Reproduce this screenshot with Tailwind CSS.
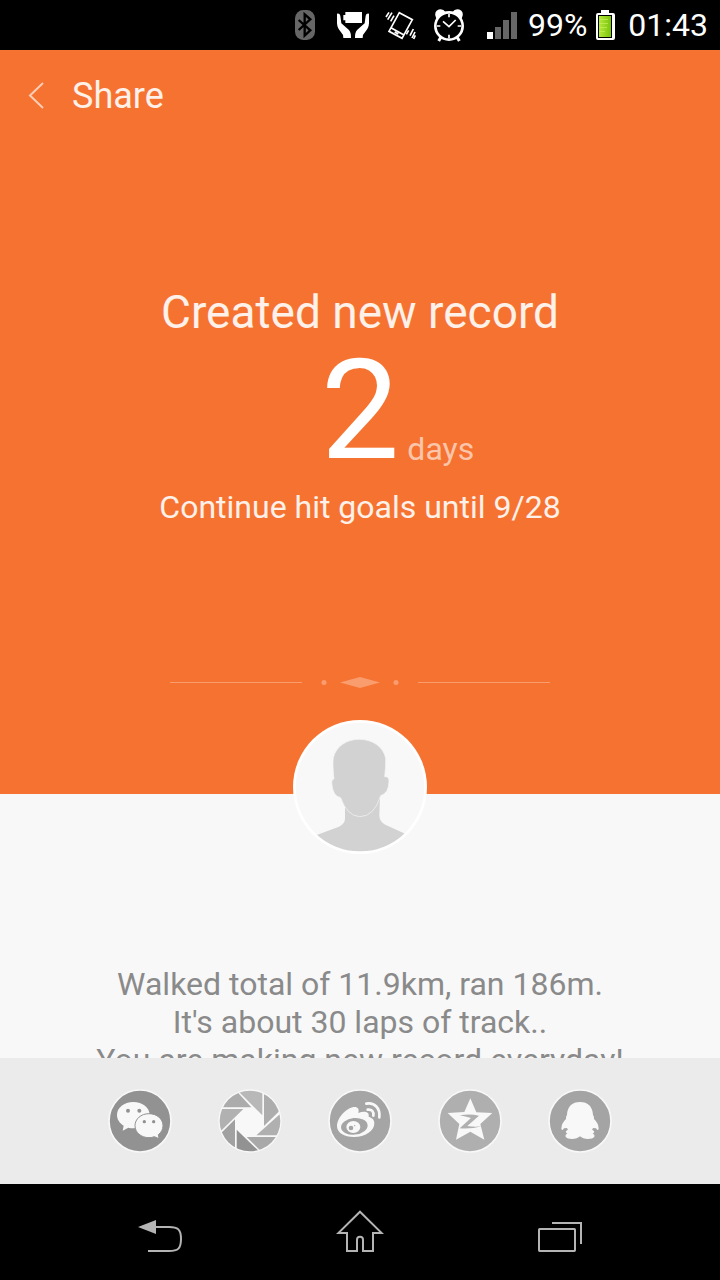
<!DOCTYPE html>
<html lang="en">
<head>
<meta charset="utf-8">
<meta name="viewport" content="width=device-width, initial-scale=1">
<title>Share</title>
<script src="https://cdn.jsdelivr.net/npm/@tailwindcss/browser@4"></script>
</head>
<body class="flex h-screen flex-col overflow-hidden bg-[#f8f8f8] font-[Roboto,sans-serif]">

<!-- Status bar -->
<div class="flex h-[50px] shrink-0 items-center justify-end bg-black pr-3 text-[32px] leading-[50px] text-white">
  <svg class="h-[50px] w-12" viewBox="3 0 144 150" role="img" aria-label="Bluetooth"><rect x="45" y="30" width="60" height="90" rx="25" fill="#666"/><path d="M56 60l35 31-17 16V43l17 15-35 32" fill="none" stroke="#000" stroke-width="7"/></svg>
  <svg class="h-[50px] w-12" viewBox="147 0 144 150" fill="#fff" role="img" aria-label="Battery saver"><path d="M196 36h50v33h-50v-8h-6V45h6z"/><path d="M171 41q8-2 10 6l3 23 22 19q8 8 7 25h-23q0-12-8-19-10-10-11-25zM267 41q-8-2-10 6l-3 23-22 19q-8 8-7 25h23q0-12 8-19 10-10 11-25z"/></svg>
  <svg class="h-[50px] w-12" viewBox="291 0 144 150" fill="none" stroke="#fff" stroke-width="5" role="img" aria-label="Vibrate"><path d="M358 38l39 21-31 56-39-21zM334 84l38 21M344 96l11 6"/><path d="M318 51l9-14M323 59l13-21M332 64l10-17M400 87l-10 20M405 96l-9 18M406 106l-5 11M386 91l-7 12"/></svg>
  <svg class="h-[50px] w-12" viewBox="435 0 144 150" fill="none" stroke="#fff" role="img" aria-label="Alarm"><circle cx="507" cy="78" r="41" stroke-width="8"/><path d="M470 51q-6-15 7-20 11-3 18 7zM544 51q6-15-7-20-11-3-18 7z" fill="#fff" stroke-width="5"/><path d="M483 111l-7 12M531 111l7 12" stroke-width="9"/><path d="M489 64l18 16 20-20" stroke-width="5"/><path d="M507 42v10M507 104v10M471 78h10M533 78h10" stroke-width="5"/></svg>
  <svg class="ml-[14px] h-[50px] w-[30px]" viewBox="0 0 30 50" fill="#666" role="img" aria-label="Signal"><path d="M0 32h6v7H0z" fill="#fff"/><path d="M8 27h6v12H8zM16 20h6v19h-6zM24 12h6v27h-6z"/></svg>
  <span class="ml-[11px]">99%</span>
  <svg class="ml-2 h-[50px] w-[20px]" viewBox="0 0 20 50" role="img" aria-label="Battery">
    <defs><linearGradient id="charge"><stop stop-color="#b5e83a"/><stop offset="1" stop-color="#79c40c"/></linearGradient></defs>
    <path d="M6 10h8v3h4q2 0 2 2v23q0 2-2 2H3q-2 0-2-2V15q0-2 2-2h3z" fill="#fff"/><path d="M3 15h14v23H3z"/><path d="M4 16h12v21H4z" fill="url(#charge)"/><path d="M4 19.500h9M4 23.500h9M4 27.500h8M4 31.500h6" stroke="#c8f05a" stroke-opacity=".7"/></svg>
  <time class="ml-[13px]">01:43</time>
</div>

<!-- Record -->
<main class="flex min-h-0 flex-1 flex-col">
  <section class="flex h-[744px] shrink-0 flex-col bg-[#f67230] text-white/90">
    <header class="flex h-[92px] items-center pl-4">
      <button type="button" aria-label="Back" class="flex h-12 w-14 items-center pl-3">
        <svg class="h-[28px] w-[18px]" viewBox="0 0 18 28" fill="none" stroke="#fff" stroke-opacity=".65" stroke-width="2"><path d="M15 1L2 13.500 15 26"/></svg>
      </button>
      <h1 class="text-[36px] leading-[48px]">Share</h1>
    </header>
    <div class="mt-[142px] text-center">
      <h2 class="text-[46px] leading-[56px]">Created new record</h2>
      <p class="grid grid-cols-[1fr_auto_1fr] items-end">
        <span class="col-start-2 text-[140px] leading-[140px] text-white">2</span>
        <span class="pb-3 pl-2 text-left text-[32px] leading-[38px] text-white/60">days</span>
      </p>
      <p class="mt-2 text-[32px] leading-[38px]">Continue hit goals until 9/28</p>
    </div>
    <div class="mx-auto mt-auto mb-[103px] flex w-[380px] items-center justify-between" aria-hidden="true">
      <span class="h-px w-[132px] bg-white/30"></span>
      <svg class="h-[18px] w-[80px]" viewBox="0 0 80 18" fill="#fff" fill-opacity=".3"><circle cx="4" cy="9.500" r="2.500"/><path d="M20 9.500L40 4l20 5.500-20 5.500z"/><circle cx="76" cy="9.500" r="2.500"/></svg>
      <span class="h-px w-[132px] bg-white/30"></span>
    </div>
  </section>

  <section class="flex min-h-0 flex-1 flex-col bg-[#f8f8f8]">
    <svg class="mx-auto -mt-[74px] size-[134px] shrink-0" viewBox="39 30 402 402" role="img" aria-label="Profile picture">
      <defs><clipPath id="face"><circle cx="240" cy="231" r="193"/></clipPath></defs>
      <circle cx="240" cy="231" r="201" fill="#fff"/><circle cx="240" cy="231" r="193" fill="#f8f8f8"/>
      <g fill="#d2d2d2" clip-path="url(#face)">
        <path d="M195 285v40q0 17-18 25l-67 25-30 60h320l-28-65-56-26q-17-9-18-27l2-60z"/>
        <path d="M162 207q-5-45-2-64c8-34 40-55 78-55s73 22 79 57q1 22-3 55 13-1 13 13 0 36-25 44-19 63-63 63-38-2-57-57-24-3-27-46 0-9 7-10z" stroke="#f8f8f8" stroke-width="2"/>
      </g>
    </svg>
    <div class="mt-[111px] min-h-0 flex-1 overflow-hidden text-center text-[32px] leading-[38px] whitespace-nowrap text-[#8a8a8a]">
      <p>Walked total of 11.9km, ran 186m.</p>
      <p>It's about 30 laps of track..</p>
      <p>You are making new record everyday!</p>
    </div>
  </section>
</main>

<!-- Share targets -->
<div class="flex h-[126px] shrink-0 items-center justify-center gap-[46px] bg-[#ebebeb]">
  <button type="button" aria-label="WeChat"><svg class="size-16" viewBox="84 147 192 192"><circle cx="180" cy="243" r="93" fill="#929292" stroke="#f8f8f8" stroke-width="5"/><path d="M160 186c28 0 49 17 49 39s-21 40-49 40q-8 0-15-2l-17 9 3-15c-12-7-20-19-20-32 0-22 21-39 49-39z" fill="#f8f8f8"/><path d="M207 221c24 0 42 16 42 36 0 11-5 20-14 27l2 12-14-6q-7 3-16 3c-24 0-42-16-42-36s18-36 42-36z" fill="#f8f8f8" stroke="#929292" stroke-width="3"/><g fill="#929292"><circle cx="144" cy="212" r="6"/><circle cx="178" cy="212" r="6"/><circle cx="193" cy="245" r="5"/><circle cx="221" cy="245" r="5"/></g></svg></button>
  <button type="button" aria-label="Moments"><svg class="size-16" viewBox="414 147 192 192">
    <defs><clipPath id="lens"><circle cx="510" cy="243" r="91"/></clipPath></defs>
    <circle cx="510" cy="243" r="95" fill="#f8f8f8"/>
    <g clip-path="url(#lens)">
      <path d="M478 157V140h69v86z" fill="#b8b8b8"/>
      <path d="M552 140h60v60l-60 58z" fill="#adadad"/>
      <path d="M601 221l20-15v80h-92z" fill="#b0b0b0"/>
      <path d="M500 291h110l-10 60h-40z" fill="#a9a9a9"/>
      <path d="M470 269v80h80l-16-18z" fill="#929292"/>
      <path d="M465 238v100h-60v-40z" fill="#a1a1a1"/>
      <path d="M490 207h-90v88z" fill="#b1b1b1"/>
      <path d="M514 202h-100v-60h60v16z" fill="#acacac"/>
    </g></svg></button>
  <button type="button" aria-label="Weibo"><svg class="size-16" viewBox="84 57 192 192"><circle cx="180" cy="153" r="93" fill="#a5a5a5" stroke="#f8f8f8" stroke-width="5"/><path d="M111 169c0-27 31-58 53-58 10 0 14 7 11 18 18-7 34-4 31 11 12 4 17 10 17 20 0 24-28 41-61 41-30 0-51-13-51-32z" fill="#f8f8f8"/><ellipse cx="163" cy="169" rx="40" ry="25" fill="#a5a5a5" transform="rotate(-6 163 169)"/><ellipse cx="160" cy="171" rx="21" ry="18" fill="#f8f8f8"/><circle cx="153" cy="174" r="7" fill="#a5a5a5"/><circle cx="164" cy="167" r="2" fill="#a5a5a5"/><path d="M199 101c25-5 42 14 39 41M203 119c12-2 19 6 17 18" fill="none" stroke="#f8f8f8" stroke-width="8" stroke-linecap="round"/></svg></button>
  <button type="button" aria-label="Qzone"><svg class="size-16" viewBox="414 57 192 192"><circle cx="510" cy="153" r="93" fill="#afafaf" stroke="#f8f8f8" stroke-width="5"/><path d="M511 85l18 42 48 2-36 33 12 47-42-24-43 24 10-47-35-33 50-3z" fill="#f8f8f8"/><path d="M479 136q30-6 58 1l-35 31q22 4 44 1-35 9-67 6l34-31q-17-5-34-8z" fill="#afafaf"/></svg></button>
  <button type="button" aria-label="QQ"><svg class="size-16" viewBox="84 147 192 192"><circle cx="180" cy="243" r="93" fill="#a4a4a4" stroke="#f8f8f8" stroke-width="5"/><path d="M180 186c24 0 38 14 39 39q4 5 3 12 14 13 14 30-3 7-8-2l-8-1-4 4 7 7q-2 5-5 6 7 2 5 9c-5 9-34 9-43-1-9 10-38 10-43 1q-2-7 5-9-3-1-5-6l7-7-4-4-8 1q-5 9-8 2 0-17 14-30-1-7 3-12c1-25 15-39 39-39z" fill="#f8f8f8"/></svg></button>
</div>

<!-- System navigation -->
<nav class="grid h-24 shrink-0 grid-cols-3 justify-items-center bg-black px-[60px]">
  <button type="button" aria-label="Back"><svg class="h-24 w-12" viewBox="48 0 144 288" fill="none" stroke="#b4b4b4" stroke-width="6"><path d="M104 129h43c27 0 36 7 36 36s-9 36-36 36H84"/><path d="M54 129l54-21v42z" fill="#b4b4b4" stroke="none"/></svg></button>
  <button type="button" aria-label="Home"><svg class="h-24 w-12" viewBox="648 0 144 288" fill="none" stroke="#b4b4b4" stroke-width="6"><path d="M720 83l65 64h-26v54h-30v-34q0-9-9-9t-9 9v34h-30v-54h-26z"/></svg></button>
  <button type="button" aria-label="Recent apps"><svg class="h-24 w-12" viewBox="48 -48 144 288" fill="none" stroke="#b4b4b4" stroke-width="6"><rect x="57" y="87" width="108" height="66" rx="2"/><path d="M96 69h87v63"/></svg></button>
</nav>
</body>
</html>
